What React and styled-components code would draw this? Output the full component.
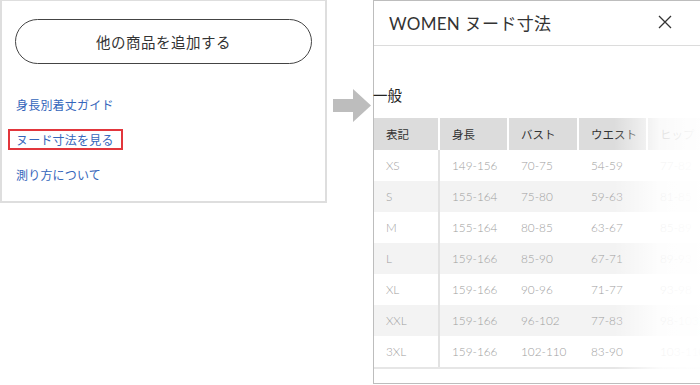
import React from "react";
import styled, { createGlobalStyle } from "styled-components";

const Global = createGlobalStyle`
  html, body { margin: 0; padding: 0; background: #fff; overflow: hidden; }
  body { font-family: Lato, "Noto Sans CJK JP", sans-serif; }
`;

const Page = styled.div`
  display: flex;
  align-items: flex-start;
  width: 700px;
  height: 385px;
  overflow: hidden;
`;

const LeftPanel = styled.div`
  box-sizing: border-box;
  flex: none;
  width: 327px;
  border: 2px solid #dedede;
  border-top-width: 1px;
  padding: 18px 13px 16px 13px;
  display: flex;
  flex-direction: column;
`;

const PillButton = styled.button`
  box-sizing: border-box;
  height: 45px;
  width: 297px;
  border: 1px solid #444;
  border-radius: 23px;
  background: #fff;
  color: #333;
  font-family: "Noto Sans CJK JP", sans-serif;
  font-size: 14.5px;
  letter-spacing: 0.5px;
  cursor: pointer;
  padding: 0;
`;

const LinkList = styled.div`
  display: flex;
  flex-direction: column;
  gap: 14px;
  margin-top: 30px;
  margin-left: -7px;
`;

const LinkItem = styled.a`
  box-sizing: border-box;
  align-self: flex-start;
  height: 21px;
  line-height: 18px;
  padding: 0 7px 0 6px;
  font-family: "Noto Sans CJK JP", sans-serif;
  font-size: 12px;
  letter-spacing: 0.2px;
  color: #3566bb;
  text-decoration: none;
  border: 2px solid ${(p) => (p.$highlight ? "#e2363c" : "transparent")};
`;

const ArrowSlot = styled.div`
  flex: none;
  width: 46px;
  display: flex;
  justify-content: flex-start;
  padding-top: 89px;
  padding-left: 6px;
  box-sizing: border-box;
`;

const RightPanel = styled.div`
  box-sizing: border-box;
  position: relative;
  flex: none;
  width: 360px;
  height: 384px;
  border: 1px solid #bdbdbd;
  border-right: none;
  background: #fff;
`;

const Header = styled.div`
  height: 44px;
  border-bottom: 1px solid #dcdcdc;
  display: flex;
  align-items: center;
  padding: 0 61px 0 15px;
`;

const Title = styled.div`
  flex: 1;
  font-family: "Lato", "Noto Sans CJK JP", sans-serif;
  font-size: 17px;
  color: #333;
  letter-spacing: 0.3px;
  padding-bottom: 2px;
`;

const CloseBtn = styled.div`
  width: 14px;
  height: 14px;
  margin-bottom: 3px;
  display: flex;
`;

const Section = styled.div`
  font-family: "Noto Sans CJK JP", sans-serif;
  font-size: 14.5px;
  color: #222;
  margin: 38px 0 0 -1px;
  height: 22px;
  line-height: 22px;
`;

const Table = styled.div`
  margin-top: 12px;
  display: flex;
  flex-direction: column;
`;

const Row = styled.div`
  display: flex;
  height: ${(p) => (p.$head ? 32 : 31)}px;
  background: ${(p) => (p.$head ? "#dcdcdc" : p.$alt ? "#f3f3f3" : "#fff")};
`;

const widths = [66, 69, 70, 69, 70];

const Cell = styled.div`
  box-sizing: border-box;
  flex: none;
  display: flex;
  align-items: center;
  padding-left: 12px;
  padding-bottom: 1px;
  font-family: ${(p) =>
    p.$head ? `"Noto Sans CJK JP", sans-serif` : `Lato, "Noto Sans CJK JP", sans-serif`};
  font-weight: ${(p) => (p.$head ? 400 : 300)};
  font-size: ${(p) => (p.$head ? 11.5 : 11.8)}px;
  color: ${(p) => (p.$head ? "#333" : "#a0a0a0")};
  border-right: 2px solid
    ${(p) => (p.$head ? "#fff" : p.$first ? "#e2e2e2" : "transparent")};
`;

const TableEnd = styled.div`
  height: 2px;
  background: #e6e6e6;
`;

const Fade = styled.div`
  position: absolute;
  top: 46px;
  bottom: 0;
  left: 240px;
  width: 120px;
  pointer-events: none;
  background: linear-gradient(
    to right,
    rgba(255, 255, 255, 0) 0%,
    rgba(255, 255, 255, 0.85) 38%,
    rgba(255, 255, 255, 0.95) 62%,
    #fff 100%
  );
`;

const head = ["表記", "身長", "バスト", "ウエスト", "ヒップ"];
const rows = [
  ["XS", "149-156", "70-75", "54-59", "77-82"],
  ["S", "155-164", "75-80", "59-63", "81-85"],
  ["M", "155-164", "80-85", "63-67", "85-89"],
  ["L", "159-166", "85-90", "67-71", "89-93"],
  ["XL", "159-166", "90-96", "71-77", "93-98"],
  ["XXL", "159-166", "96-102", "77-83", "98-103"],
  ["3XL", "159-166", "102-110", "83-90", "103-110"],
];

export default function App() {
  return (
    <>
      <Global />
      <Page>
        <LeftPanel>
          <PillButton>他の商品を追加する</PillButton>
          <LinkList>
            <LinkItem href="#">身長別着丈ガイド</LinkItem>
            <LinkItem href="#" $highlight>
              ヌード寸法を見る
            </LinkItem>
            <LinkItem href="#">測り方について</LinkItem>
          </LinkList>
        </LeftPanel>
        <ArrowSlot>
          <svg width="39" height="34" viewBox="0 0 39 34">
            <path d="M0 10 H20 V0 L38 16.5 L20 33 V23 H0 Z" fill="#bdbdbd" />
          </svg>
        </ArrowSlot>
        <RightPanel>
          <Header>
            <Title>WOMEN ヌード寸法</Title>
            <CloseBtn>
              <svg width="14" height="14" viewBox="0 0 14 14">
                <path d="M1 1 L13 13 M13 1 L1 13" stroke="#333" strokeWidth="1.3" fill="none" />
              </svg>
            </CloseBtn>
          </Header>
          <Section>一般</Section>
          <Table>
            <Row $head>
              {head.map((h, i) => (
                <Cell key={h} $head style={{ width: widths[i] }}>
                  {h}
                </Cell>
              ))}
            </Row>
            {rows.map((r, ri) => (
              <Row key={r[0]} $alt={ri % 2 === 1}>
                {r.map((c, i) => (
                  <Cell key={i} $first={i === 0} style={{ width: widths[i] }}>
                    {c}
                  </Cell>
                ))}
              </Row>
            ))}
            <TableEnd />
          </Table>
          <Fade />
        </RightPanel>
      </Page>
    </>
  );
}
